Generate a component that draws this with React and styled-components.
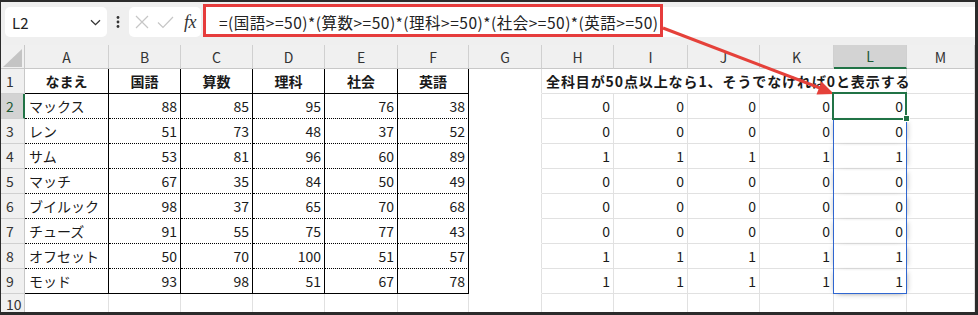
import React from 'react'
import styled, { createGlobalStyle, css } from 'styled-components'

const GlobalStyle = createGlobalStyle`
  html, body { margin: 0; padding: 0; background: #fff; overflow: hidden; }
  body { font-family: "Noto Sans CJK JP", "Noto Sans", sans-serif; }
`

const COLS = ['A', 'B', 'C', 'D', 'E', 'F', 'G', 'H', 'I', 'J', 'K', 'L', 'M']
const WIDTHS = '24px 84px 72px 72px 72px 73px 71px 73px 72px 74px 72px 74px 73px 1fr'

const ROWS = [
    ['マックス', 88, 85, 95, 76, 38],
    ['レン', 51, 73, 48, 37, 52],
    ['サム', 53, 81, 96, 60, 89],
    ['マッチ', 67, 35, 84, 50, 49],
    ['ブイルック', 98, 37, 65, 70, 68],
    ['チューズ', 91, 55, 75, 77, 43],
    ['オフセット', 50, 70, 100, 51, 57],
    ['モッド', 93, 98, 51, 67, 78],
]

const Frame = styled.div`
    position: relative;
    width: 978px;
    height: 315px;
    box-sizing: border-box;
    border-style: solid;
    border-color: #2b2b2b;
    border-width: 2px 3px 3px 1px;
    overflow: hidden;
    display: flex;
    flex-direction: column;
    background: #fff;
`

const FormulaBar = styled.div`
    flex: none;
    height: 43px;
    box-sizing: border-box;
    padding: 5px 0 0 4px;
    background: #efefef;
    display: flex;
    align-items: flex-start;
`

const NameBox = styled.div`
    width: 102px;
    height: 30px;
    box-sizing: border-box;
    padding: 0 6px 0 7px;
    background: #fff;
    border-radius: 5px;
    display: flex;
    align-items: center;
    justify-content: space-between;
    font-size: 15px;
    color: #222;
`

const Kebab = styled.div`
    width: 22px;
    height: 30px;
    display: flex;
    align-items: center;
    justify-content: center;
`

const EditBox = styled.div`
    width: 72px;
    height: 30px;
    box-sizing: border-box;
    padding: 0 4px 0 6px;
    background: #fff;
    border-radius: 5px;
    display: flex;
    align-items: center;
    gap: 8px;
`

const Fx = styled.span`
    font-family: "Liberation Serif", "DejaVu Serif", serif;
    font-style: italic;
    font-size: 18px;
    color: #333;
    margin-left: 2px;
    letter-spacing: -0.5px;
`

const FormulaInput = styled.div`
    flex: 1;
    height: 30px;
    margin-left: 2px;
    background: #fff;
    display: flex;
`

const Highlight = styled.div`
    width: 460px;
    height: 33px;
    margin-top: -3px;
    box-sizing: border-box;
    border: 3px solid #e63c3c;
    padding: 2px 0 0 13px;
    display: flex;
    align-items: center;
    font-size: 15.5px;
    letter-spacing: 0.5px;
    color: #222;
    white-space: nowrap;
`

const Grid = styled.div`
    flex: 1;
    display: grid;
    grid-template-columns: ${WIDTHS};
    grid-template-rows: 24px repeat(9, 25px) 1fr;
`

const HeadCell = styled.div`
    position: relative;
    box-sizing: border-box;
    background: ${p => (p.$active ? '#d3d3d3' : '#f0f0f0')};
    border-right: 1px solid #d0d0d0;
    border-bottom: ${p => (p.$active ? '2px solid #217346' : '1px solid #c8c8c8')};
    display: flex;
    align-items: center;
    justify-content: center;
    font-size: 14px;
    color: ${p => (p.$active ? '#1d5a36' : '#333')};
`

const RowHead = styled.div`
    box-sizing: border-box;
    background: ${p => (p.$active ? '#d3d3d3' : '#f0f0f0')};
    border-right: ${p => (p.$active ? '2px solid #217346' : '1px solid #c8c8c8')};
    border-bottom: 1px solid #d0d0d0;
    display: flex;
    align-items: center;
    padding-left: 5px;
    font-size: 14px;
    color: ${p => (p.$active ? '#1d5a36' : '#333')};
`

const Corner = styled.div`
    box-sizing: border-box;
    background: #f0f0f0;
    border-right: 1px solid #c8c8c8;
    border-bottom: 1px solid #c8c8c8;
    display: flex;
    align-items: flex-end;
    justify-content: flex-end;
    padding: 0 2px 1px 0;
`

const Cell = styled.div`
    position: relative;
    box-sizing: border-box;
    min-width: 0;
    grid-column: ${p => (p.$span ? `span ${p.$span}` : 'auto')};
    border-right: 1px solid ${p => p.$right || '#e1e1e1'};
    border-bottom: 1px ${p => p.$bottomStyle || 'solid'} ${p => p.$bottom || '#e1e1e1'};
    padding: 0 ${p => (p.$align === 'right' ? '3px' : '4px')};
    display: flex;
    align-items: center;
    justify-content: ${p => (p.$align === 'right' ? 'flex-end' : p.$align === 'center' ? 'center' : 'flex-start')};
    font-size: 14px;
    font-weight: ${p => (p.$bold ? 700 : 400)};
    color: #1a1a1a;
    white-space: nowrap;
    letter-spacing: ${p => p.$spacing || '0'};

    ${p => p.$selected && css`
        z-index: 2;
        &::after {
            content: '';
            position: absolute;
            left: -2px;
            top: -2px;
            right: -1px;
            bottom: -2px;
            border: 2px solid #217346;
        }
        &::before {
            content: '';
            position: absolute;
            right: -4px;
            bottom: -4px;
            width: 5px;
            height: 5px;
            background: #217346;
            border: 1px solid #fff;
            z-index: 3;
        }
    `}

    ${p => p.$range && css`
        box-shadow: 4px 0 5px -3px rgba(0, 0, 0, 0.22), -4px 0 5px -3px rgba(0, 0, 0, 0.22)
            ${p.$range === 'last' ? ', 0 4px 5px -3px rgba(0, 0, 0, 0.22)' : ''};
        &::after {
            content: '';
            position: absolute;
            left: -1px;
            top: 0;
            right: -1px;
            bottom: -1px;
            border-left: 1px solid #2f66d0;
            border-right: 1px solid #2f66d0;
            border-bottom: ${p.$range === 'last' ? '1px solid #2f66d0' : 'none'};
        }
    `}
`

const Overlay = styled.svg`
    position: absolute;
    left: -1px;
    top: -2px;
    width: 978px;
    height: 315px;
    pointer-events: none;
`

const Chevron = () => (
    <svg width="11" height="7" viewBox="0 0 11 7">
        <path d="M1 1.2 L5.5 5.6 L10 1.2" fill="none" stroke="#333" strokeWidth="1.3" />
    </svg>
)

const Dots = () => (
    <svg width="4" height="12" viewBox="0 0 4 12">
        <circle cx="2" cy="1.5" r="1.4" fill="#333" />
        <circle cx="2" cy="6" r="1.4" fill="#333" />
        <circle cx="2" cy="10.5" r="1.4" fill="#333" />
    </svg>
)

const Cross = () => (
    <svg width="14" height="14" viewBox="0 0 14 14">
        <path d="M1 1 L13 13 M13 1 L1 13" stroke="#c6c6c6" strokeWidth="1.2" fill="none" />
    </svg>
)

const Check = () => (
    <svg width="17" height="13" viewBox="0 0 17 13">
        <path d="M1 6.5 L6 11.5 L16 1" stroke="#c6c6c6" strokeWidth="1.2" fill="none" />
    </svg>
)

const Triangle = () => (
    <svg width="19" height="18" viewBox="0 0 19 18">
        <polygon points="0,18 19,0 19,18" fill="#c4c4c4" />
    </svg>
)

// A..F form a bordered table: solid outline, dotted lines between data rows
const tableBorders = r => {
    if (r === 1 || r === 9) return { $right: '#000', $bottom: '#000' }
    return { $right: '#000', $bottom: '#000', $bottomStyle: 'dotted' }
}

const App = () => {
    const rows = []

    rows.push(
        <RowHead key="rh1">1</RowHead>,
        ...['なまえ', '国語', '算数', '理科', '社会', '英語'].map((t, c) => (
            <Cell key={`h${c}`} $align="center" $bold {...tableBorders(1)}>{t}</Cell>
        )),
        <Cell key="g1" $bottom="#fff" />,
        <Cell key="msg" $span={5} $bold $spacing="0.9px">全科目が50点以上なら1、そうでなければ0と表示する</Cell>,
        <Cell key="m1" />
    )

    ROWS.forEach((row, i) => {
        const r = i + 2
        const ok = row.slice(1).every(v => v >= 50) ? 1 : 0
        rows.push(
            <RowHead key={`rh${r}`} $active={r === 2}>{r}</RowHead>,
            <Cell key={`a${r}`} {...tableBorders(r)}>{row[0]}</Cell>,
            ...row.slice(1).map((v, c) => (
                <Cell key={`s${r}-${c}`} $align="right" {...tableBorders(r)}>{v}</Cell>
            )),
            <Cell key={`g${r}`} $bottom="#fff" />,
            ...[0, 1, 2, 3, 4].map(k => (
                <Cell
                    key={`o${r}-${k}`}
                    $align="right"
                    $selected={k === 4 && r === 2}
                    $range={k === 4 && r > 2 ? (r === 9 ? 'last' : 'mid') : undefined}
                >
                    {ok}
                </Cell>
            )),
            <Cell key={`m${r}`} />
        )
    })

    rows.push(
        <RowHead key="rh10">10</RowHead>,
        ...COLS.map(c => <Cell key={`z${c}`} />)
    )

    return (
        <Frame>
            <GlobalStyle />
            <FormulaBar>
                <NameBox>
                    <span>L2</span>
                    <Chevron />
                </NameBox>
                <Kebab><Dots /></Kebab>
                <EditBox>
                    <Cross />
                    <Check />
                    <Fx>fx</Fx>
                </EditBox>
                <FormulaInput>
                    <Highlight>=(国語&gt;=50)*(算数&gt;=50)*(理科&gt;=50)*(社会&gt;=50)*(英語&gt;=50)</Highlight>
                </FormulaInput>
            </FormulaBar>
            <Grid>
                <Corner><Triangle /></Corner>
                {COLS.map(c => (
                    <HeadCell key={c} $active={c === 'L'}>{c}</HeadCell>
                ))}
                {rows}
            </Grid>
            <Overlay viewBox="0 0 978 315">
                <line x1="663" y1="28" x2="820" y2="88" stroke="#e5413a" strokeWidth="3" />
                <polygon points="834,94 816.5,94.5 821.5,81.5" fill="#e5413a" />
            </Overlay>
        </Frame>
    )
}

export default App
